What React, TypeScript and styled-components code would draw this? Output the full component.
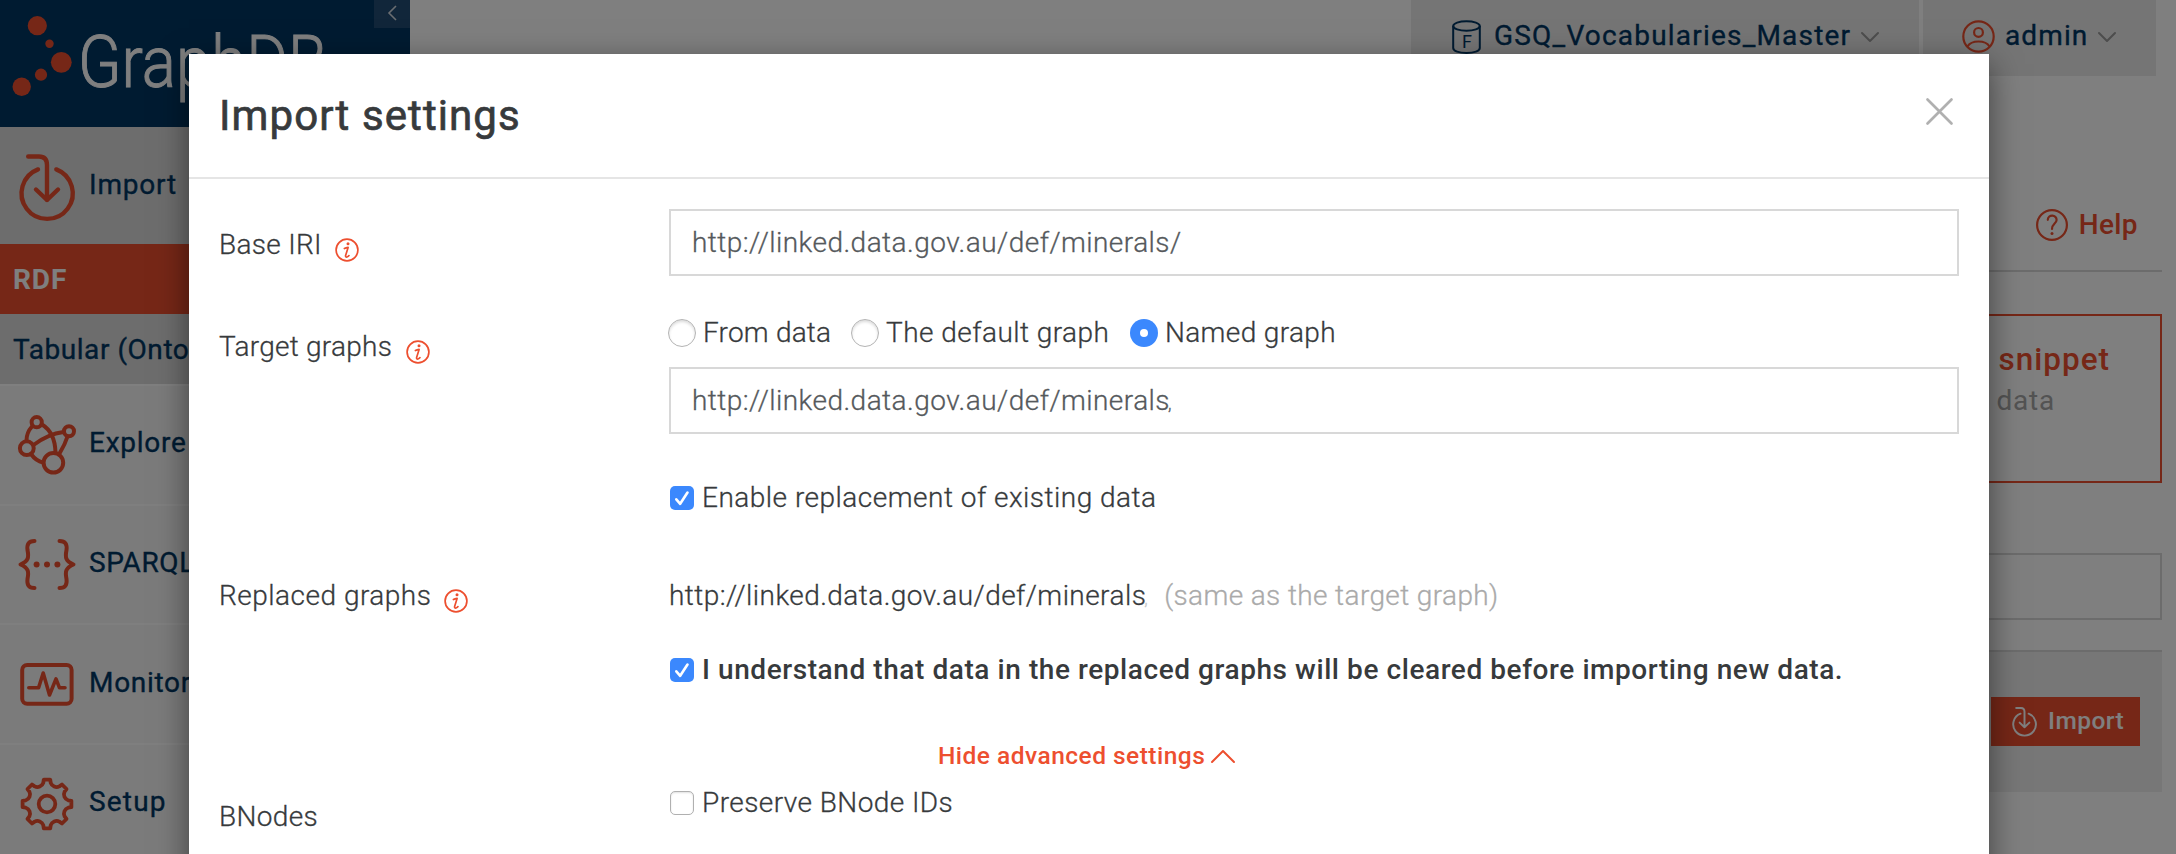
import React from 'react';
import styled, { createGlobalStyle } from 'styled-components';

const orange = '#ed4f2f';
const navy = '#003663';
const ink = '#373a3c';
const line = '#d8d8d8';

const GlobalStyle = createGlobalStyle`
  * { box-sizing: border-box; }
  body {
    margin: 0;
    overflow: hidden;
    background: #fff;
    font-family: Roboto, "Liberation Sans", sans-serif;
    font-size: 28px;
    line-height: 40px;
    color: ${ink};
  }
  #root { height: 854px; overflow: hidden; }
  svg { display: block; flex: none; overflow: visible; }
`;

const Page = styled.div`
  display: flex;
  height: 854px;
  overflow: hidden;
`;

/* Sidebar */

const Sidebar = styled.aside`
  width: 410px;
  flex: none;
  background: #f7f7f7;
`;

const Brand = styled.div`
  display: flex;
  justify-content: space-between;
  align-items: flex-start;
  height: 127px;
  background: ${navy};
`;

const Collapse = styled.div`
  display: flex;
  align-items: center;
  justify-content: center;
  width: 36px;
  height: 28px;
  padding-bottom: 3px;
  background: #224c74;
`;

const MenuItem = styled.div<{ $active?: boolean }>`
  display: flex;
  align-items: center;
  height: ${p => (p.$active ? 117 : 119.7)}px;
  padding-top: ${p => (p.$active ? 2 : 0)}px;
  border-top: ${p => (p.$active ? 'none' : '2px solid #fff')};
  background: ${p => (p.$active ? '#dadada' : '#f7f7f7')};
`;

const MenuIcon = styled.div`
  display: flex;
  justify-content: center;
  width: 94px;
  margin-right: -5px;
`;

const MenuLabel = styled.span<{ $spacing: number }>`
  padding: 0 0 3px 0;
  color: ${navy};
  letter-spacing: ${p => p.$spacing}px;
  -webkit-text-stroke: 0.35px ${navy};
`;

const SubItem = styled.div<{ $active?: boolean }>`
  height: 70px;
  padding: 1px 0 0 13px;
  line-height: 70px;
  overflow: hidden;
  white-space: nowrap;
  letter-spacing: ${p => (p.$active ? 0.9 : 0.55)}px;
  font-weight: ${p => (p.$active ? 700 : 400)};
  color: ${p => (p.$active ? '#fff' : navy)};
  background: ${p => (p.$active ? orange : '#dadada')};
  -webkit-text-stroke: ${p => (p.$active ? 0 : 0.35)}px ${navy};
`;

/* Main area */

const Main = styled.main`
  flex: 1;
  display: flex;
  flex-direction: column;
`;

const TopBar = styled.header`
  display: flex;
  justify-content: flex-end;
  gap: 4px;
  height: 76px;
  padding-right: 20px;
`;

const TopItem = styled.div<{ $width: number; $pad: number; $spacing: number }>`
  display: flex;
  align-items: center;
  width: ${p => p.$width}px;
  padding: 0 0 3px ${p => p.$pad}px;
  background: #ebebeb;
  color: ${navy};
  letter-spacing: ${p => p.$spacing}px;
  -webkit-text-stroke: 0.35px ${navy};
`;

const TopText = styled.span<{ $left: number; $right: number }>`
  margin: 0 ${p => p.$right}px 0 ${p => p.$left}px;
  padding-bottom: 2px;
`;

const Content = styled.section`
  display: flex;
  flex-direction: column;
  margin: 0 14px 0 32px;
`;

const HelpRow = styled.div`
  display: flex;
  justify-content: flex-end;
  align-items: center;
  gap: 11px;
  height: 196px;
  padding: 104px 24px 0 0;
  border-bottom: 2px solid ${line};
  color: ${orange};
  font-weight: 500;
  letter-spacing: 0.4px;
`;

const SnippetCard = styled.div`
  align-self: flex-end;
  width: 560px;
  height: 169px;
  margin-top: 42px;
  padding: 23px 50px 0 0;
  border: 2px solid ${orange};
  text-align: right;
`;

const SnippetTitle = styled.div`
  font-size: 31.5px;
  font-weight: 500;
  letter-spacing: 1px;
  line-height: 42px;
  color: ${orange};
`;

const SnippetNote = styled.div`
  padding-right: 55px;
  letter-spacing: 0.8px;
  color: #a6a6a6;
`;

const SearchBox = styled.div`
  height: 67px;
  margin-top: 70px;
  border: 2px solid ${line};
`;

const ImportBar = styled.div`
  display: flex;
  justify-content: flex-end;
  align-items: center;
  height: 142px;
  margin-top: 30px;
  padding: 0 22px 2px 0;
  border-top: 2px solid ${line};
  background: #efefef;
`;

const ImportButton = styled.div`
  display: flex;
  align-items: center;
  gap: 11px;
  width: 149px;
  height: 49px;
  padding-left: 21px;
  background: ${orange};
  color: #fff;
  font-size: 24.5px;
  font-weight: 500;
  letter-spacing: 0.45px;
`;

/* Modal */

const Backdrop = styled.div`
  position: absolute;
  inset: 0;
  display: flex;
  overflow: hidden;
  height: 854px;
  padding: 54px 187px 0 189px;
  background: rgba(0, 0, 0, 0.5);
`;

const Modal = styled.div`
  width: 1800px;
  height: 1200px;
  background: #fff;
  box-shadow: 0 10px 30px rgba(0, 0, 0, 0.5);
`;

const ModalHeader = styled.div`
  display: flex;
  justify-content: space-between;
  align-items: flex-start;
  height: 125px;
  padding: 31px 36px 0 30px;
  border-bottom: 2px solid #e5e5e5;
`;

const ModalTitle = styled.h4`
  margin: 0;
  padding-top: 1px;
  font-size: 42px;
  font-weight: 400;
  line-height: 60px;
  letter-spacing: 1.1px;
  -webkit-text-stroke: 0.7px ${ink};
`;

const CloseIcon = styled.div`
  padding-top: 13px;
`;

const ModalBody = styled.div`
  display: flex;
  flex-direction: column;
  padding: 30px 30px 0;
  font-weight: 300;
`;

const FormRow = styled.div<{ $gap?: number }>`
  display: grid;
  grid-template-columns: 450px 1290px;
  align-items: start;
  margin-top: ${p => p.$gap ?? 0}px;
`;

const Label = styled.div<{ $top: number; $spacing: number; $iconGap?: number }>`
  display: flex;
  align-items: center;
  gap: ${p => p.$iconGap ?? 13}px;
  padding-top: ${p => p.$top}px;
  letter-spacing: ${p => p.$spacing}px;
  -webkit-text-stroke: 0.3px ${ink};
  svg { margin-top: 9px; }
`;

const Field = styled.div`
  display: flex;
  flex-direction: column;
`;

const TextInput = styled.div<{ $gap?: number }>`
  display: flex;
  align-items: center;
  height: 67px;
  margin-top: ${p => p.$gap ?? 0}px;
  padding: 1px 21px 0;
  border: 2px solid ${line};
  color: #55595c;
  letter-spacing: 0.46px;
  -webkit-text-stroke: 0.3px #55595c;
`;

const Remnant = styled.span<{ $faint?: boolean }>`
  align-self: center;
  margin-left: -2px;
  padding-top: 6px;
  font-size: 18px;
  line-height: 40px;
  opacity: ${p => (p.$faint ? 0.3 : 1)};
`;

const RadioGroup = styled.div`
  display: grid;
  grid-template-columns: 183px 279px auto;
  margin-left: -1px;
`;

const Option = styled.div<{ $spacing: number; $gap?: number; $strong?: boolean; $inset?: number }>`
  display: flex;
  align-items: center;
  gap: ${p => (p.$inset ? 8 : 7)}px;
  height: 40px;
  margin-top: ${p => p.$gap ?? 0}px;
  padding-top: 2px;
  padding-left: ${p => p.$inset ?? 0}px;
  white-space: nowrap;
  font-weight: ${p => (p.$strong ? 500 : 300)};
  letter-spacing: ${p => p.$spacing}px;
  -webkit-text-stroke: ${p => (p.$strong ? 0 : 0.3)}px ${ink};
`;

const Radio = styled.span<{ $on?: boolean }>`
  display: flex;
  align-items: center;
  justify-content: center;
  flex: none;
  width: 28px;
  height: 28px;
  border-radius: 50%;
  border: ${p => (p.$on ? 'none' : '1.5px solid #b4b4b4')};
  background: ${p => (p.$on ? '#3b88fd' : '#fff')};
  box-shadow: ${p => (p.$on ? 'none' : 'inset 0 2px 3px rgba(0, 0, 0, 0.14)')};
  &::after {
    content: '';
    width: 8px;
    height: 8px;
    border-radius: 50%;
    background: #fff;
  }
`;

const Check = styled.span<{ $on?: boolean }>`
  display: flex;
  flex: none;
  width: 24px;
  height: 24px;
  border-radius: 5px;
  border: ${p => (p.$on ? 'none' : '1.5px solid #b0b0b0')};
  background: ${p => (p.$on ? '#3b88fd' : '#fff')};
  box-shadow: ${p => (p.$on ? 'none' : 'inset 0 1px 2px rgba(0, 0, 0, 0.12)')};
`;

const GraphLine = styled.div`
  display: flex;
  align-items: center;
  height: 40px;
  padding-top: 2px;
  letter-spacing: 0.44px;
  -webkit-text-stroke: 0.3px ${ink};
`;

const Muted = styled.span`
  margin-left: 16px;
  color: #aaa;
  letter-spacing: 0.38px;
  -webkit-text-stroke: 0.3px #aaa;
`;

const AdvancedToggle = styled.div`
  display: flex;
  align-items: center;
  gap: 6px;
  height: 36px;
  margin: 49px 0 0 719px;
  color: ${orange};
  font-size: 24.5px;
  font-weight: 500;
  letter-spacing: 0.48px;
`;

/* Icons */

const ImportIcon = ({ width = 56, height = 70, weight = 4.4, color = orange }) => (
  <svg width={width} height={height} viewBox="0 0 56 70" fill="none" stroke={color} strokeWidth={weight} strokeLinecap="round" strokeLinejoin="round">
    <path d="M37.3 17.4A25.6 25.6 0 1 1 19 17.4" />
    <path d="M9.200 4.500H20Q28 4.500 28 13V48M17 37.500L28 48L39 37.500" />
  </svg>
);

const ExploreIcon = () => (
  <svg width="58" height="60" viewBox="18 415.500 58 60" fill="none" stroke={orange} strokeWidth="4" strokeLinecap="round">
    <circle cx="36.700" cy="422.700" r="5.100" />
    <circle cx="69" cy="431.700" r="5" />
    <circle cx="26.800" cy="448.700" r="6.900" />
    <circle cx="53.400" cy="463.300" r="9.800" />
    <path d="M32 427Q26.500 433 26.500 441M42 425Q55 433 55.500 453M33.500 445.500Q48 434.500 63.500 432.500M67.500 437Q65 445 59.500 454M31 454.500Q36 461.500 43 463" />
  </svg>
);

const brace = 'M17.500 4C11.500 4 9.800 7.500 10.500 13C12 20.500 11.500 24 3.500 27.500C11.500 31 12 34.500 10.500 42C9.800 47.500 11.500 51 17.500 51';

const SparqlIcon = () => (
  <svg width="60" height="55" viewBox="0 0 60 55" fill="none" stroke={orange} strokeWidth="4" strokeLinecap="round" strokeLinejoin="round">
    <path d={brace} />
    <path d={brace} transform="translate(60 0) scale(-1 1)" />
    <g fill={orange} stroke="none">
      <circle cx="19.600" cy="27.500" r="3" />
      <circle cx="30" cy="27.500" r="3" />
      <circle cx="40.400" cy="27.500" r="3" />
    </g>
  </svg>
);

const MonitorIcon = () => (
  <svg width="54" height="43" viewBox="0 0 54 43" fill="none" stroke={orange} strokeWidth="4" strokeLinecap="round" strokeLinejoin="round">
    <rect x="2.200" y="2" width="49.400" height="38.800" rx="5" />
    <path strokeWidth="3.600" d="M8.800 24.800H18.600L23.200 10L29.500 32L36 15.800L39.500 24.800H45" />
  </svg>
);

const gearPath = (() => {
  const at = (r: number, deg: number) => {
    const a = ((deg - 90) * Math.PI) / 180;
    return `${(27 + r * Math.cos(a)).toFixed(2)} ${(27 + r * Math.sin(a)).toFixed(2)}`;
  };
  let d = '';
  for (let i = 0; i < 8; i += 1) {
    const c = i * 45;
    d += `${i ? 'L' : 'M'}${at(24.6, c - 7.5)}L${at(24.6, c + 7.5)}L${at(21.5, c + 10)}A6.200 6.200 0 0 0 ${at(21.5, c + 35)}`;
  }
  return `${d}Z`;
})();

const SetupIcon = () => (
  <svg width="54" height="54" viewBox="0 0 54 54" fill="none" stroke={orange} strokeWidth="3.800" strokeLinejoin="round">
    <path d={gearPath} />
    <circle cx="27" cy="27" r="8.300" />
  </svg>
);

const DatabaseIcon = () => (
  <svg width="29" height="34" viewBox="0 0 29 34" fill="none" stroke={navy} strokeWidth="2">
    <ellipse cx="14.500" cy="6" rx="13.300" ry="4.800" />
    <path d="M1.200 6V28C1.200 31 7 33 14.500 33S27.800 31 27.800 28V6" />
    <text x="10" y="27.500" fontSize="18" fill={navy} stroke="none">F</text>
  </svg>
);

const UserIcon = () => (
  <svg width="33" height="33" viewBox="0 0 33 33" fill="none" stroke={orange} strokeWidth="2.200">
    <circle cx="16.500" cy="16.500" r="15.200" />
    <circle cx="16.500" cy="12.400" r="4.400" />
    <path d="M5.500 26.500Q8.500 21.500 16.500 21.500T27.500 26.500" />
  </svg>
);

const Chevron = ({ width = 18, height = 10, up = false, color = '#9a9a9a', weight = 2 }) => (
  <svg width={width} height={height} viewBox={`0 0 ${width} ${height}`} fill="none" stroke={color} strokeWidth={weight} strokeLinecap="round" strokeLinejoin="round">
    <path d={up ? `M1 ${height - 1}L${width / 2} 1L${width - 1} ${height - 1}` : `M1 1L${width / 2} ${height - 1}L${width - 1} 1`} />
  </svg>
);

const HelpIcon = () => (
  <svg width="32" height="32" viewBox="0 0 32 32" fill="none" stroke={orange} strokeWidth="2.200" strokeLinecap="round">
    <circle cx="16" cy="16" r="14.900" />
    <path d="M11.800 10.800C12 5.200 20.800 5.400 20.600 11C20.500 14.600 16 14.800 16 20" />
    <circle cx="16" cy="24.600" r="1.500" fill={orange} stroke="none" />
  </svg>
);

const InfoIcon = () => (
  <svg width="24" height="24" viewBox="0 0 24 24" fill="none" stroke={orange} strokeWidth="1.700" strokeLinecap="round" strokeLinejoin="round">
    <circle cx="12" cy="12" r="10.900" />
    <path d="M9.400 10.600Q11 9.700 13.100 9.400L10.600 17.400Q10.300 19.300 12 19Q13.300 18.600 14 17.600" />
    <circle cx="13" cy="5.700" r="1.500" fill={orange} stroke="none" />
  </svg>
);

const Tick = () => (
  <svg width="24" height="24" viewBox="0 0 24 24" fill="none" stroke="#fff" strokeWidth="2.600" strokeLinecap="round" strokeLinejoin="round">
    <path d="M6.300 13.300L10.200 17.800L17.500 6.500" />
  </svg>
);

const Logo = () => (
  <svg width="330" height="127" viewBox="0 0 330 127">
    <g fill={orange}>
      <circle cx="37.300" cy="25.700" r="9.600" />
      <circle cx="49.500" cy="43.700" r="4.200" />
      <circle cx="61.300" cy="62.300" r="10.400" />
      <circle cx="41" cy="74.700" r="6.100" />
      <circle cx="21.700" cy="86.700" r="9.200" />
    </g>
    <text x="78" y="87" fontSize="73" fontWeight="300" fill="#fff" stroke="#fff" strokeWidth="1" textLength="249" lengthAdjust="spacingAndGlyphs">GraphDB</text>
  </svg>
);

const menu = [
  { label: 'Explore', spacing: 0.75, icon: <ExploreIcon /> },
  { label: 'SPARQL', spacing: 0.6, icon: <SparqlIcon /> },
  { label: 'Monitor', spacing: 0.7, icon: <MonitorIcon /> },
  { label: 'Setup', spacing: 1.2, icon: <SetupIcon /> },
];

export default function App() {
  return (
    <>
      <GlobalStyle />
      <Page>
        <Sidebar>
          <Brand>
            <Logo />
            <Collapse>
              <svg width="9" height="16" viewBox="0 0 9 16" fill="none" stroke="#d5dbe2" strokeWidth="1.600">
                <path d="M8 1L1 8L8 15" />
              </svg>
            </Collapse>
          </Brand>
          <MenuItem $active>
            <MenuIcon><ImportIcon /></MenuIcon>
            <MenuLabel $spacing={0.79}>Import</MenuLabel>
          </MenuItem>
          <SubItem $active>RDF</SubItem>
          <SubItem>Tabular (OntoRefine)</SubItem>
          {menu.map(m => (
            <MenuItem key={m.label}>
              <MenuIcon>{m.icon}</MenuIcon>
              <MenuLabel $spacing={m.spacing}>{m.label}</MenuLabel>
            </MenuItem>
          ))}
        </Sidebar>
        <Main>
          <TopBar>
            <TopItem $width={508} $pad={41} $spacing={1.2}>
              <DatabaseIcon />
              <TopText $left={13} $right={10}>GSQ_Vocabularies_Master</TopText>
              <Chevron />
            </TopItem>
            <TopItem $width={233} $pad={39} $spacing={1.1}>
              <UserIcon />
              <TopText $left={10} $right={10}>admin</TopText>
              <Chevron />
            </TopItem>
          </TopBar>
          <Content>
            <HelpRow><HelpIcon />Help</HelpRow>
            <SnippetCard>
              <SnippetTitle>Import text snippet</SnippetTitle>
              <SnippetNote>Type or paste RDF data</SnippetNote>
            </SnippetCard>
            <SearchBox />
            <ImportBar>
              <ImportButton>
                <ImportIcon width={25} height={31} weight={4.4} color="#fff" />
                Import
              </ImportButton>
            </ImportBar>
          </Content>
        </Main>
      </Page>
      <Backdrop>
        <Modal>
          <ModalHeader>
            <ModalTitle>Import settings</ModalTitle>
            <CloseIcon>
              <svg width="27" height="27" viewBox="0 0 27 27" stroke="#b0b0b0" strokeWidth="2.700" strokeLinecap="round">
                <path d="M1.500 1.500L25.500 25.500M25.500 1.500L1.500 25.500" />
              </svg>
            </CloseIcon>
          </ModalHeader>
          <ModalBody>
            <FormRow>
              <Label $top={16} $spacing={0.3}>Base IRI<InfoIcon /></Label>
              <TextInput>http://linked.data.gov.au/def/minerals/</TextInput>
            </FormRow>
            <FormRow $gap={36}>
              <Label $top={15} $spacing={0.26} $iconGap={14}>Target graphs<InfoIcon /></Label>
              <Field>
                <RadioGroup>
                  <Option $spacing={0.2}><Radio />From data</Option>
                  <Option $spacing={0.46}><Radio />The default graph</Option>
                  <Option $spacing={0.36}><Radio $on />Named graph</Option>
                </RadioGroup>
                <TextInput $gap={15}>
                  http://linked.data.gov.au/def/minerals<Remnant>,</Remnant>
                </TextInput>
                <Option $gap={43} $inset={1} $spacing={0.49}>
                  <Check $on><Tick /></Check>Enable replacement of existing data
                </Option>
              </Field>
            </FormRow>
            <FormRow $gap={58}>
              <Label $top={1} $spacing={0.5}>Replaced graphs<InfoIcon /></Label>
              <Field>
                <GraphLine>
                  http://linked.data.gov.au/def/minerals<Remnant $faint>,</Remnant>
                  <Muted>(same as the target graph)</Muted>
                </GraphLine>
                <Option $gap={34} $inset={1} $spacing={0.57} $strong>
                  <Check $on><Tick /></Check>
                  I understand that data in the replaced graphs will be cleared before importing new data.
                </Option>
              </Field>
            </FormRow>
            <AdvancedToggle>
              Hide advanced settings
              <Chevron width={24} height={13} up color={orange} weight={2} />
            </AdvancedToggle>
            <FormRow $gap={8}>
              <Label $top={15} $spacing={0.34}>BNodes</Label>
              <Option $inset={1} $spacing={0.43}><Check />Preserve BNode IDs</Option>
            </FormRow>
          </ModalBody>
        </Modal>
      </Backdrop>
    </>
  );
}
